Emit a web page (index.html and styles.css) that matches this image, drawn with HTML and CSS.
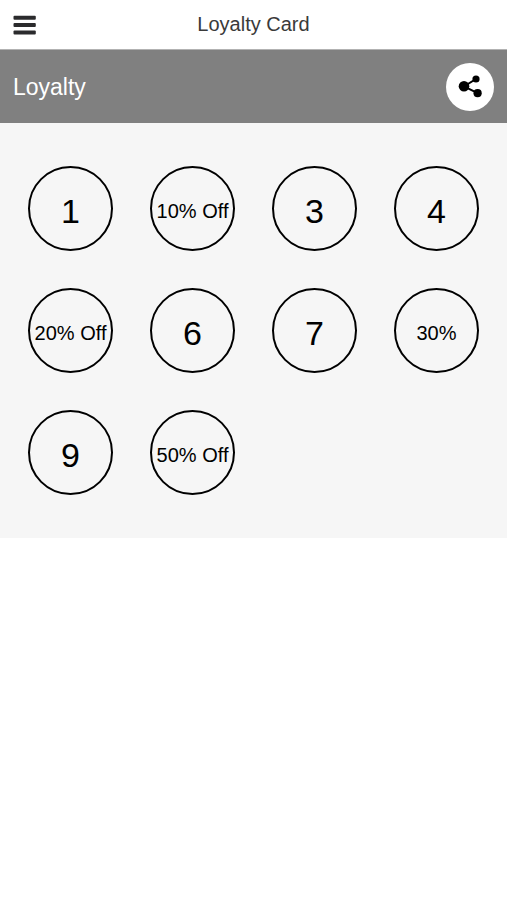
FILE: index.html
```html
<!DOCTYPE html>
<html lang="en">
<head>
  <meta charset="UTF-8">
  <meta name="viewport" content="width=device-width, initial-scale=1.0">
  <title>Loyalty Card</title>
  <link rel="stylesheet" href="styles.css">
</head>
<body>
  <header class="top-bar">
    <button type="button" class="menu-button" aria-label="Menu">
      <svg width="23" height="20" viewBox="0 0 23 20" fill="#2b2b2d">
        <rect x="0.5" y="0.7" width="22.3" height="4" rx="1"/>
        <rect x="0.5" y="8" width="22.3" height="4" rx="1"/>
        <rect x="0.5" y="15.4" width="22.3" height="4" rx="1"/>
      </svg>
    </button>
    <h1>Loyalty Card</h1>
  </header>

  <main>
    <section class="banner">
      <h2>Loyalty</h2>
      <button type="button" class="share-button" aria-label="Share">
        <svg width="24" height="24" viewBox="0 0 24 24">
          <path d="M18 4 L6 11.3 L19.6 18.2" fill="none" stroke="#000" stroke-width="2"/>
          <circle cx="6" cy="11.3" r="5.3"/>
          <circle cx="18" cy="4" r="3.6"/>
          <circle cx="19.6" cy="18.2" r="4.1"/>
        </svg>
      </button>
    </section>

    <ol class="stamps">
      <li class="stamp">1</li>
      <li class="stamp reward">10% Off</li>
      <li class="stamp">3</li>
      <li class="stamp">4</li>
      <li class="stamp reward">20% Off</li>
      <li class="stamp">6</li>
      <li class="stamp">7</li>
      <li class="stamp reward">30%</li>
      <li class="stamp">9</li>
      <li class="stamp reward">50% Off</li>
    </ol>
  </main>
</body>
</html>
```
FILE: styles.css
```css
* {
  box-sizing: border-box;
}

body {
  margin: 0;
  background: #fff;
  color: #000;
  font-family: "Helvetica Neue", "Liberation Sans", Arial, sans-serif;
}

h1,
h2 {
  margin: 0;
  font-weight: normal;
}

button {
  padding: 0;
  border: none;
  cursor: pointer;
}

button svg {
  display: block;
}

/* Top bar */
.top-bar {
  display: grid;
  grid-template-columns: 1fr auto 1fr;
  align-items: center;
  height: 50px;
  padding: 0 13px 2px;
  border-bottom: 1px solid #b2b2b2;
}

.top-bar h1 {
  color: #3a3a3a;
  font-size: 20px;
  line-height: 24px;
}

.menu-button {
  justify-self: start;
  padding-top: 2px;
  background: none;
}

/* Banner */
.banner {
  display: flex;
  align-items: center;
  justify-content: space-between;
  height: 73px;
  padding: 0 13px;
  background: #808080;
}

.banner h2 {
  color: #fff;
  font-size: 23px;
  line-height: 28px;
}

.share-button {
  display: flex;
  align-items: center;
  justify-content: center;
  width: 48px;
  height: 48px;
  border-radius: 50%;
  background: #fff;
}

/* Stamps */
.stamps {
  display: grid;
  grid-template-columns: repeat(4, 1fr);
  gap: 37px;
  margin: 0;
  padding: 43px 28px;
  background: #f6f6f6;
  list-style: none;
}

.stamp {
  display: flex;
  align-items: center;
  justify-content: center;
  min-width: 0;
  aspect-ratio: 1;
  padding-top: 6px;
  border: 2px solid #000;
  border-radius: 50%;
  font-size: 34px;
  white-space: nowrap;
}

.reward {
  font-size: 20px;
}
```
